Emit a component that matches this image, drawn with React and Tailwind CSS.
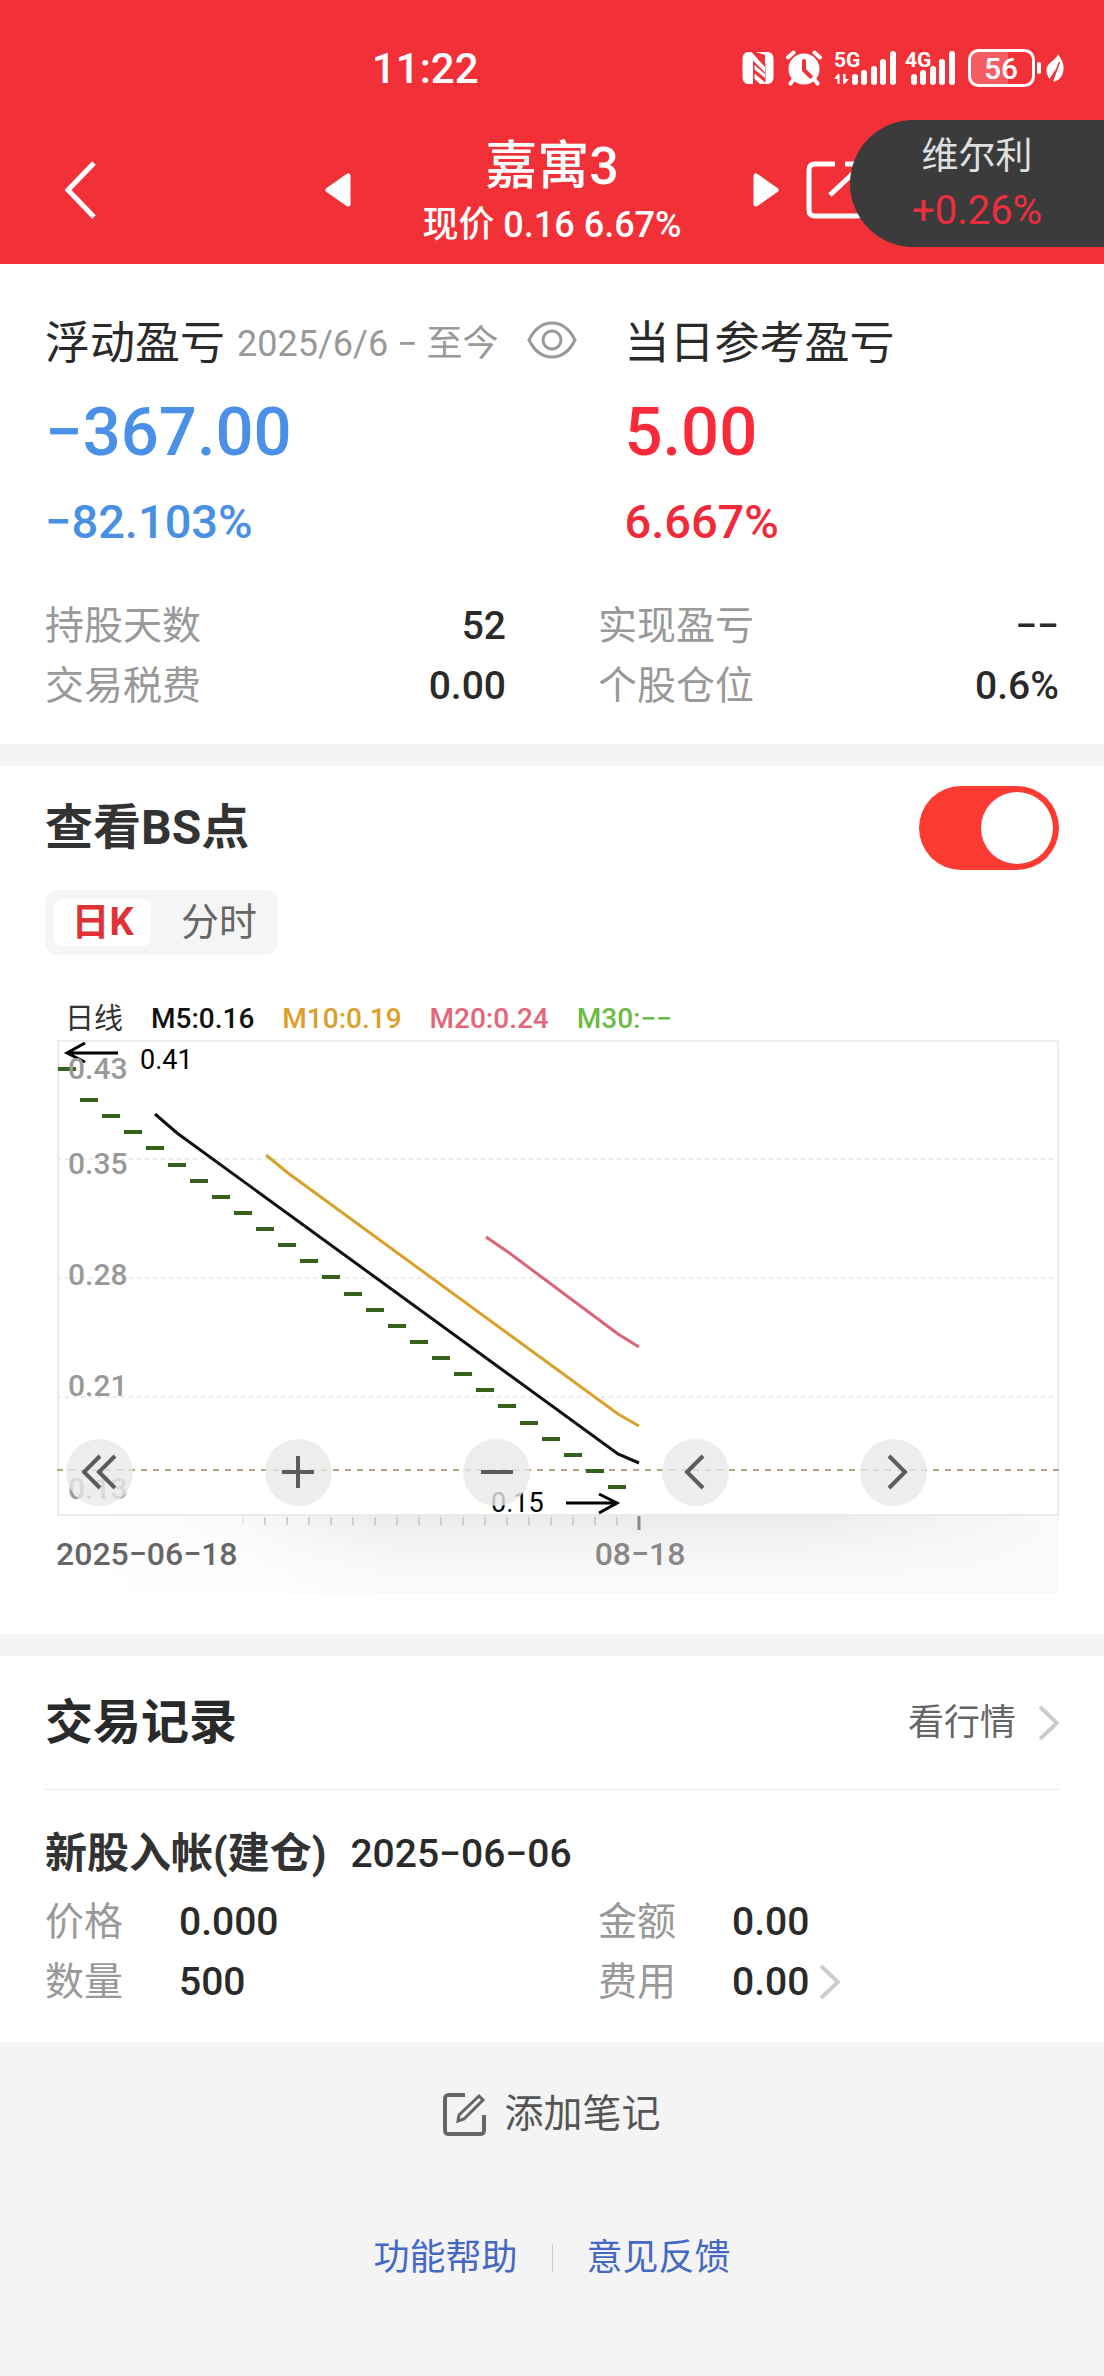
import React from "react";

const FONT = "font-[Roboto,'Noto_Sans_CJK_SC',sans-serif]";

/* ---------- status bar ---------- */

function NfcIcon() {
  return (
    <svg width="32" height="34" viewBox="0 0 32 34" aria-hidden="true">
      <path d="M7 1h1.500l0 32H7c-4 0-6.500-2.500-6.500-7V8c0-4.500 2.500-7 6.500-7z" fill="#fff" />
      <path d="M23.500 1H25c4 0 6.500 2.500 6.500 7v18c0 4.500-2.500 7-6.500 7h-1.500z" fill="#fff" />
      <path d="M7 1h2.500l13.500 15v5.500L11 9.500V33H7z" fill="#fff" />
      <path d="M12.500 14l10.500 9v4L12.500 18.500z" fill="#fff" />
      <path d="M12.500 22.500L25 33h-7l-5.500-5z" fill="#fff" />
      <path d="M14 1h11v12l-2-1V4z" fill="#fff" />
    </svg>
  );
}

function AlarmIcon() {
  return (
    <svg width="36" height="36" viewBox="0 0 36 36" fill="none" aria-hidden="true">
      <circle cx="18" cy="19" r="15.500" fill="#fff" />
      <path d="M2 7.500L7.500 2.500M34 7.500L28.500 2.500" stroke="#fff" strokeWidth="4" strokeLinecap="round" />
      <path d="M8 29l-3.500 4.500M28 29l3.500 4.500" stroke="#fff" strokeWidth="4" strokeLinecap="round" />
      <path d="M18 11v9l6.500 6.500" stroke="#f13038" strokeWidth="4" strokeLinecap="round" strokeLinejoin="round" />
    </svg>
  );
}

function SignalBars({ x }) {
  return [
    [0, 34],
    [9, 30],
    [19, 26],
    [28, 19],
    [38, 11],
  ].map(([dx, y]) => (
    <rect key={dx} x={x + dx} y={y} width="6" height={45 - y} rx="3" fill="#fff" />
  ));
}

function Signal5G() {
  return (
    <svg width="63" height="56" viewBox="0 0 63 56" className="-mr-1" aria-label="5G">
      <text x="0" y="27" fill="#fff" className="text-[21px] font-bold">5G</text>
      <path d="M5.500 44V34H4L0 39h3.500v5zM9 34v10h1.500l4.500-5h-3.500v-5z" fill="#fff" />
      <SignalBars x={18} />
    </svg>
  );
}

function Signal4G() {
  return (
    <svg width="51" height="56" viewBox="0 0 51 56" aria-label="4G">
      <text x="0" y="27" fill="#fff" className="text-[21px] font-bold">4G</text>
      <SignalBars x={6} />
    </svg>
  );
}

function Battery() {
  return (
    <svg width="74" height="38" viewBox="0 0 74 38" aria-label="56">
      <path d="M12 2h28v34H12C6 36 2 32 2 26V12C2 6 6 2 12 2z" fill="#fff" fillOpacity=".22" />
      <rect x="1.500" y="1.500" width="64" height="35" rx="9" fill="none" stroke="#fff" strokeWidth="3" />
      <rect x="69" y="13" width="4" height="12" rx="2" fill="#fff" />
      <text x="33" y="30" fill="#fff" textAnchor="middle" className="text-[30px] font-medium">56</text>
    </svg>
  );
}

function LeafIcon() {
  return (
    <svg width="18" height="30" viewBox="0 0 18 30" aria-hidden="true">
      <path d="M12 1c3 5 6 9 5.500 15-.5 7-4 11-8.500 12.500L6.500 28l4-13L3.500 26C-.5 20-.5 15 3 11 7 7 11 5 12 1z" fill="#fff" />
      <path d="M13.500 9L6 29" stroke="#f13038" strokeWidth="1.500" />
    </svg>
  );
}

/* ---------- common icons ---------- */

function Chevron({ className = "" }) {
  return (
    <svg width="21" height="36" viewBox="0 0 21 36" fill="none" className={className} aria-hidden="true">
      <path d="M2 2l17 16L2 34" stroke="#ccc" strokeWidth="4" />
    </svg>
  );
}

/* ---------- header ---------- */

function Header() {
  return (
    <header className="bg-[#f23038] pb-5 text-white">
      <div className="flex h-[136px] items-center justify-between pr-10 pl-[372px]">
        <time className="text-[42px] font-medium">11:22</time>
        <div className="flex items-center gap-3">
          <NfcIcon />
          <AlarmIcon />
          <Signal5G />
          <Signal4G />
          <div className="flex items-center gap-1">
            <Battery />
            <LeafIcon />
          </div>
        </div>
      </div>

      <div className="grid grid-cols-[1fr_454px_1fr] grid-rows-[108px] items-center">
        <button type="button" aria-label="返回" className="justify-self-start pl-16">
          <svg width="32" height="58" viewBox="0 0 32 58" fill="none">
            <path d="M30 2L4 29l26 27" stroke="#fff" strokeWidth="5" />
          </svg>
        </button>
        <div className="flex items-center justify-between">
          <button type="button" aria-label="上一只">
            <svg width="26" height="34" viewBox="0 0 26 34">
              <path d="M23 3v28L3 17z" fill="#fff" stroke="#fff" strokeWidth="5" strokeLinejoin="round" />
            </svg>
          </button>
          <div className="pt-2 text-center">
            <h1 className="text-[52px] leading-[62px] font-medium">嘉寓3</h1>
            <p className="text-[36px] leading-[54px] font-medium">现价 0.16 6.67%</p>
          </div>
          <button type="button" aria-label="下一只">
            <svg width="26" height="34" viewBox="0 0 26 34">
              <path d="M3 3v28l20-14z" fill="#fff" stroke="#fff" strokeWidth="5" strokeLinejoin="round" />
            </svg>
          </button>
        </div>
        <button type="button" aria-label="分享" className="justify-self-start pl-[27px]">
          <svg width="62" height="58" viewBox="0 0 62 58" fill="none" stroke="#fff" strokeWidth="5">
            <path d="M29 3H9c-4 0-6 2-6 6v40c0 4 2 6 6 6h42c4 0 6-2 6-6V32" />
            <path d="M39 3h18v18M56 4L24 34" />
          </svg>
        </button>
      </div>

      <aside className="absolute top-[120px] right-0 flex h-[127px] w-[254px] flex-col items-center justify-center rounded-l-full bg-[#3b3b3b]">
        <span className="text-[37px] leading-[54px] text-[#e0e0e0]">维尔利</span>
        <span className="text-[40px] leading-[54px] text-[#ee2e3e]">+0.26%</span>
      </aside>
    </header>
  );
}

/* ---------- summary ---------- */

function Stat({ label, value }) {
  return (
    <div className="flex items-center justify-between text-[39px] leading-[60px]">
      <dt className="text-[#999]">{label}</dt>
      <dd className="font-medium text-[#2a2a2a]">{value}</dd>
    </div>
  );
}

function Summary() {
  return (
    <section className="bg-white px-[45px] pt-12 pb-7">
      <div className="grid grid-cols-[4fr_3fr]">
        <div>
          <div className="flex h-16 items-center">
            <h2 className="text-[45px] text-[#2a2a2a]">浮动盈亏</h2>
            <span className="ml-3 text-[36px] text-[#999]">2025/6/6 − 至今</span>
            <button type="button" aria-label="隐藏金额" className="ml-7 pb-2">
              <svg width="50" height="38" viewBox="0 0 50 38" fill="none" stroke="#999" strokeWidth="3">
                <path d="M2 19C8 7 16 2 25 2s17 5 23 17c-6 12-14 17-23 17S8 31 2 19z" />
                <circle cx="25" cy="19" r="9" />
              </svg>
            </button>
          </div>
          <p className="mt-4 text-[67px] leading-[80px] font-medium text-[#4a90e8]">−367.00</p>
          <p className="mt-5 text-[47px] leading-[60px] font-medium text-[#4a90e2]">−82.103%</p>
        </div>
        <div>
          <h2 className="text-[45px] leading-[64px] text-[#2a2a2a]">当日参考盈亏</h2>
          <p className="mt-4 text-[67px] leading-[80px] font-medium text-[#fa2a3a]">5.00</p>
          <p className="mt-5 text-[47px] leading-[60px] font-medium text-[#f02a3a]">6.667%</p>
        </div>
      </div>
      <dl className="mt-11 grid grid-cols-2 gap-x-[92px]">
        <Stat label="持股天数" value="52" />
        <Stat label="实现盈亏" value="−−" />
        <Stat label="交易税费" value="0.00" />
        <Stat label="个股仓位" value="0.6%" />
      </dl>
    </section>
  );
}

/* ---------- chart ---------- */

const CANDLES = Array.from({ length: 26 }, (_, i) => (i === 0 ? 29 : Math.round(60 + (i - 1) * 16.125)));
const TICKS = Array.from({ length: 18 }, (_, i) => 186 + i * 22);
const PRICES = [
  ["0.43", 39],
  ["0.35", 134],
  ["0.28", 245],
  ["0.21", 356],
  ["0.13", 459],
];

function KLine() {
  return (
    <svg viewBox="0 0 1002 554" className="block h-auto w-full" fill="none" role="img" aria-label="日K">
      <defs>
        <linearGradient id="shade" x1="0" y1="0" x2="0" y2="1">
          <stop offset="0" stopColor="#ebebeb" />
          <stop offset=".45" stopColor="#f5f5f5" />
          <stop offset=".75" stopColor="#f9f9f9" />
          <stop offset="1" stopColor="#fafafa" />
        </linearGradient>
        <linearGradient id="fadeLeft">
          <stop offset="0" stopColor="#fff" />
          <stop offset=".5" stopColor="#fff" stopOpacity=".75" />
          <stop offset="1" stopColor="#fff" stopOpacity="0" />
        </linearGradient>
        <linearGradient id="fadeRight">
          <stop offset="0" stopColor="#fafafa" stopOpacity="0" />
          <stop offset="1" stopColor="#fafafa" />
        </linearGradient>
      </defs>

      <rect x="0" y="476" width="1002" height="78" fill="url(#shade)" />
      <rect x="0" y="476" width="340" height="78" fill="url(#fadeLeft)" />
      <rect x="740" y="476" width="262" height="78" fill="url(#fadeRight)" />

      <rect x="1" y="1" width="1000" height="474" fill="#fff" stroke="#ebebeb" strokeWidth="2" />
      <path d="M0 119H1002M0 238H1002M0 357H1002" stroke="#ececec" strokeWidth="2" strokeDasharray="4 4" />
      <path d="M0 430H1002" stroke="#b5a482" strokeWidth="2" strokeDasharray="6 6" />

      <path d="M61 13H10M28 3L10 13l18 9" stroke="#000" strokeWidth="3" />
      <text x="83" y="29" fill="#000" className="text-[27px]">0.41</text>

      <path
        d={CANDLES.map((y, i) => `M${1 + i * 22} ${y}h18`).join("")}
        stroke="#36611d"
        strokeWidth="4"
      />
      <path d="M98 74L120 93L561 414L582 423" stroke="#111" strokeWidth="3" />
      <path d="M209 115L231 133L561 374L582 386" stroke="#d9a02c" strokeWidth="3" />
      <path d="M429 197L451 212L561 294L582 307" stroke="#dc6375" strokeWidth="3" />

      {PRICES.map(([label, y]) => (
        <text key={label} x="11" y={y} fill="#999" className="text-[30px] font-medium">
          {label}
        </text>
      ))}

      <text x="434" y="472" fill="#000" className="text-[27px]">0.15</text>
      <path d="M509 463H560M542 454l18 9l-18 10" stroke="#000" strokeWidth="3" />

      {TICKS.map((x, i) => (
        <path key={x} d={`M${x} 477v8`} stroke={i === 0 ? "#ddd" : "#aaa"} strokeWidth="1" />
      ))}
      <path d="M582 476v14" stroke="#888" strokeWidth="3" />
      <text x="-1" y="525" fill="#666" className="text-[32px] font-medium">2025−06−18</text>
      <text x="583" y="525" fill="#888" textAnchor="middle" className="text-[32px] font-medium">08−18</text>
    </svg>
  );
}

const CONTROLS = [
  ["快退", "M18 2L2 18l16 16M33 2L17 18l16 16"],
  ["放大", "M18 2v32M2 18h32"],
  ["缩小", "M2 18h32"],
  ["向左", "M26 2L10 18l16 16"],
  ["向右", "M13 2l16 16L13 34"],
];

function Chart() {
  return (
    <div className="relative ml-3">
      <KLine />
      <div className="absolute top-[72%] right-0 left-[9px] grid grid-cols-5 justify-items-start">
        {CONTROLS.map(([label, d]) => (
          <button
            key={label}
            type="button"
            aria-label={label}
            className="flex size-[67px] items-center justify-center rounded-full bg-[#e9e9e9]/80"
          >
            <svg width="36" height="36" viewBox="0 0 36 36" fill="none">
              <path d={d} stroke="#5c5c5c" strokeWidth="4" />
            </svg>
          </button>
        ))}
      </div>
    </div>
  );
}

function ChartSection() {
  return (
    <section className="mt-[22px] bg-white px-[45px] pt-5 pb-10">
      <div className="flex h-21 items-center justify-between">
        <label htmlFor="bs" className="text-[48px] font-bold text-[#333]">
          查看BS点
        </label>
        <input
          id="bs"
          type="checkbox"
          role="switch"
          defaultChecked
          className="flex h-21 w-[140px] appearance-none items-center rounded-full bg-gray-300 px-1.5 before:size-[72px] before:rounded-full before:bg-white checked:justify-end checked:bg-[#fb3b32]"
        />
      </div>

      <div className="mt-5 inline-flex gap-[18px] rounded-xl bg-[#f5f5f5] p-[9px] align-top text-[38px] leading-[47px]">
        <button type="button" aria-pressed="true" className="w-[97px] rounded-lg bg-white font-bold text-[#e03236]">
          日K
        </button>
        <button type="button" aria-pressed="false" className="w-[100px] text-[#666]">
          分时
        </button>
      </div>

      <div className="mt-[43px] flex gap-7 pl-5 text-[28px] leading-[42px] font-medium whitespace-nowrap">
        <span className="text-[29px] font-normal text-[#333]">日线</span>
        <span className="text-[#111]">M5:0.16</span>
        <span className="text-[#dba02a]">M10:0.19</span>
        <span className="text-[#e5657a]">M20:0.24</span>
        <span className="text-[#6cbb45]">M30:−−</span>
      </div>
      <Chart />
    </section>
  );
}

/* ---------- trades ---------- */

function Detail({ label, value, more }) {
  return (
    <div className="flex items-center text-[39px] leading-[60px]">
      <dt className="w-[134px] text-[#999]">{label}</dt>
      <dd className="flex items-center font-medium text-[#2a2a2a]">
        {value}
        {more && <Chevron className="ml-2.5" />}
      </dd>
    </div>
  );
}

function Trades() {
  return (
    <section className="mt-[22px] bg-white px-[45px] pb-[30px]">
      <div className="flex h-[134px] items-center justify-between border-b border-[#ebebeb]">
        <h2 className="text-[48px] font-bold text-[#2a2a2a]">交易记录</h2>
        <a href="#quote" className="flex items-center gap-[22px] text-[36px] text-[#666]">
          看行情
          <Chevron />
        </a>
      </div>
      <div className="flex items-center gap-6 pt-8 leading-[64px]">
        <h3 className="text-[42px] font-bold text-[#333]">新股入帐(建仓)</h3>
        <time className="text-[39px] font-medium text-[#2a2a2a]">2025−06−06</time>
      </div>
      <dl className="mt-1.5 grid grid-cols-2 gap-x-[92px]">
        <Detail label="价格" value="0.000" />
        <Detail label="金额" value="0.00" />
        <Detail label="数量" value="500" />
        <Detail label="费用" value="0.00" more />
      </dl>
    </section>
  );
}

function Footer() {
  return (
    <footer className="flex flex-col items-center pt-11 pb-20">
      <button type="button" className="flex h-14 items-center gap-[18px] text-[39px] text-[#555]">
        <svg width="43" height="43" viewBox="0 0 43 43" fill="none" stroke="#666" strokeWidth="4">
          <path d="M22 2H6C3 2 2 3 2 6v31c0 3 1 4 4 4h31c3 0 4-1 4-4V22" />
          <path d="M36 3l4 4-19 19-6 2 1-6z" strokeWidth="3" />
        </svg>
        添加笔记
      </button>
      <nav className="mt-[88px] flex h-14 items-center gap-[34px] text-[36px] text-[#4468c4]">
        <a href="#help">功能帮助</a>
        <span className="h-7 w-px bg-[#ccc]" />
        <a href="#feedback">意见反馈</a>
      </nav>
    </footer>
  );
}

export default function App() {
  return (
    <main className={`relative min-h-screen bg-[#f4f4f4] ${FONT}`} lang="zh-CN">
      <Header />
      <Summary />
      <ChartSection />
      <Trades />
      <Footer />
    </main>
  );
}
